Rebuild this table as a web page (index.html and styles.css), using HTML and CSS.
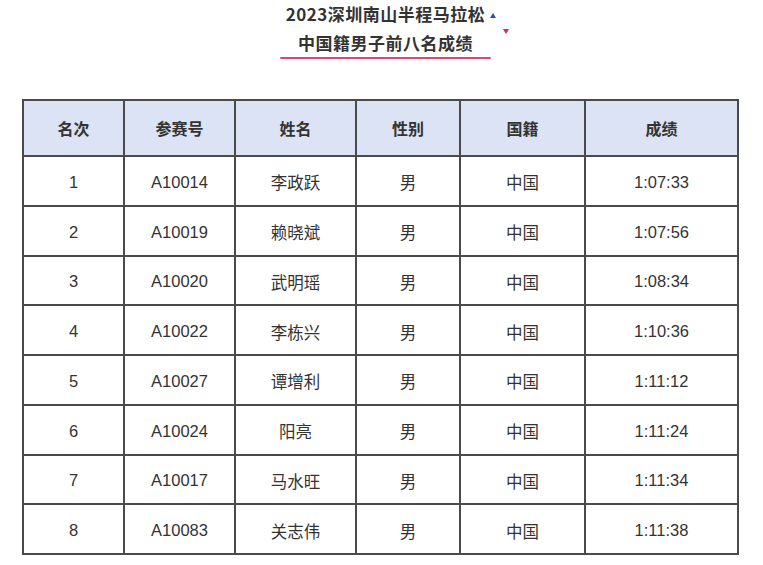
FILE: index.html
```html
<!DOCTYPE html>
<html lang="zh">
<head>
<meta charset="utf-8">
<link rel="stylesheet" href="styles.css">
</head>
<body>
<div class="page">
  <header class="title">
    <div class="title-line1">2023深圳南山半程马拉松<span class="tri-blue"></span></div>
    <div class="title-line2">中国籍男子前八名成绩<span class="tri-red"></span></div>
    <div class="title-rule"></div>
  </header>
  <table class="results">
    <colgroup>
      <col class="c1"><col class="c2"><col class="c3"><col class="c4"><col class="c5"><col class="c6">
    </colgroup>
    <thead>
      <tr><th>名次</th><th>参赛号</th><th>姓名</th><th>性别</th><th>国籍</th><th>成绩</th></tr>
    </thead>
    <tbody>
      <tr><td>1</td><td>A10014</td><td>李政跃</td><td>男</td><td>中国</td><td>1:07:33</td></tr>
      <tr><td>2</td><td>A10019</td><td>赖晓斌</td><td>男</td><td>中国</td><td>1:07:56</td></tr>
      <tr><td>3</td><td>A10020</td><td>武明瑶</td><td>男</td><td>中国</td><td>1:08:34</td></tr>
      <tr><td>4</td><td>A10022</td><td>李栋兴</td><td>男</td><td>中国</td><td>1:10:36</td></tr>
      <tr><td>5</td><td>A10027</td><td>谭增利</td><td>男</td><td>中国</td><td>1:11:12</td></tr>
      <tr><td>6</td><td>A10024</td><td>阳亮</td><td>男</td><td>中国</td><td>1:11:24</td></tr>
      <tr><td>7</td><td>A10017</td><td>马水旺</td><td>男</td><td>中国</td><td>1:11:34</td></tr>
      <tr><td>8</td><td>A10083</td><td>关志伟</td><td>男</td><td>中国</td><td>1:11:38</td></tr>
    </tbody>
  </table>
</div>
</body>
</html>
```

FILE: styles.css
```css
html, body {
  margin: 0;
  padding: 0;
  background: #ffffff;
}
body {
  font-family: "Liberation Sans", "Noto Sans CJK SC", sans-serif;
  color: #333333;
}
.page {
  width: 763px;
  height: 565px;
  overflow: hidden;
  padding-top: 3px;
  box-sizing: border-box;
}
.title {
  display: flex;
  flex-direction: column;
  align-items: center;
  padding-left: 8px;
}
.title-line1, .title-line2 {
  position: relative;
  font-family: "Noto Sans CJK SC", sans-serif;
  font-weight: 700;
  font-size: 17px;
  letter-spacing: 0.5px;
  line-height: 22px;
  color: #333333;
}
.title-line2 {
  margin-top: 7px;
}
.tri-blue {
  position: absolute;
  right: -11px;
  top: 10px;
  width: 0;
  height: 0;
  border-left: 3px solid transparent;
  border-right: 3px solid transparent;
  border-bottom: 5px solid #2d4fb0;
}
.tri-red {
  position: absolute;
  right: -36px;
  top: -3px;
  width: 0;
  height: 0;
  border-left: 3px solid transparent;
  border-right: 3px solid transparent;
  border-top: 5px solid #d6265c;
}
.title-rule {
  width: 211px;
  height: 2px;
  background: #e0457a;
  margin-top: 3px;
  border-radius: 1px;
}
.results {
  margin: 40px 0 0 22px;
  width: 715px;
  border-collapse: collapse;
  table-layout: fixed;
}
.c1 { width: 101px; }
.c2 { width: 111px; }
.c3 { width: 121px; }
.c4 { width: 104px; }
.c5 { width: 125px; }
.c6 { width: 153px; }
.results th, .results td {
  border: 2px solid #4a4a4a;
  text-align: center;
  padding: 0;
  font-size: 16px;
  color: #333333;
}
.results th {
  background: #dbe3f5;
  height: 54px;
  font-family: "Noto Sans CJK SC", sans-serif;
  font-weight: 700;
}
.results td {
  height: 49.75px;
  padding-top: 3px;
  box-sizing: border-box;
  font-size: 16.5px;
  font-weight: 400;
}
```
